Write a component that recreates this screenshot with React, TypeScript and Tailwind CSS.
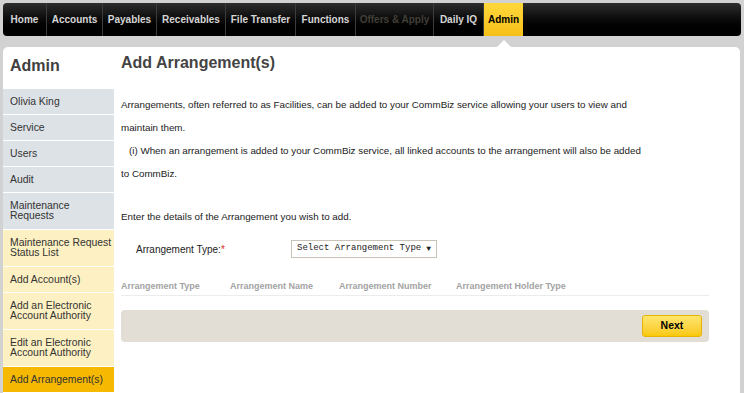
import React from 'react';

const navItems = [
  { label: 'Home', w: 'w-[44px]' },
  { label: 'Accounts', w: 'w-[56px]' },
  { label: 'Payables', w: 'w-[54px]' },
  { label: 'Receivables', w: 'w-[69px]' },
  { label: 'File Transfer', w: 'w-[70px]' },
  { label: 'Functions', w: 'w-[60px]' },
  { label: 'Offers & Apply', w: 'w-[78px]', disabled: true },
  { label: 'Daily IQ', w: 'w-[50px]' },
];

const sideItems = [
  { label: 'Olivia King', tone: 'gray' },
  { label: 'Service', tone: 'gray' },
  { label: 'Users', tone: 'gray' },
  { label: 'Audit', tone: 'gray' },
  { label: 'Maintenance Requests', tone: 'gray', tall: true },
  { label: 'Maintenance Request Status List', tone: 'yellow', tall: true },
  { label: 'Add Account(s)', tone: 'yellow' },
  { label: 'Add an Electronic Account Authority', tone: 'yellow', tall: true },
  { label: 'Edit an Electronic Account Authority', tone: 'yellow', tall: true },
  { label: 'Add Arrangement(s)', tone: 'active' },
];

function TopNav() {
  return (
    <div className="mx-[3px] mt-[3px] flex h-[33px] items-stretch rounded-[4px] bg-gradient-to-b from-[#2e2e2e] via-[#0a0a0a] to-black">
      {navItems.map((item) => (
        <div
          key={item.label}
          className={`flex shrink-0 items-center justify-center border-r border-[#3c3c3c] text-[10px] font-bold whitespace-nowrap ${item.w} ${
            item.disabled ? 'text-[#403e35]' : 'text-[#d6d6d6]'
          }`}
        >
          {item.label}
        </div>
      ))}
      <div className="relative flex w-[39px] shrink-0 items-center justify-center bg-gradient-to-b from-[#ffd83a] to-[#f6bf16] text-[10px] font-bold text-black">
        Admin
        {/* pointer under the active tab */}
        <div className="absolute left-1/2 top-full mt-[4px] h-0 w-0 -translate-x-1/2 border-x-[7px] border-b-[7px] border-x-transparent border-b-white" />
      </div>
    </div>
  );
}

function Sidebar() {
  return (
    <div className="w-[111px] shrink-0">
      <div className="h-[42px] pl-[7px] pt-[9px] text-[16px] font-bold leading-[20px] text-[#404040]">Admin</div>
      <div className="flex flex-col">
        {sideItems.map((item) => (
          <div
            key={item.label}
            className={`border-b border-white pl-[7px] text-[10.4px] leading-[10px] text-[#333] ${
              item.tall ? 'py-[8px]' : 'py-[7.5px]'
            } ${
              item.tone === 'gray' ? 'bg-[#dde2e6]' : item.tone === 'yellow' ? 'bg-[#fdf0c2]' : 'bg-[#f6b800]'
            }`}
          >
            {item.label}
          </div>
        ))}
      </div>
    </div>
  );
}

function Content() {
  return (
    <div className="flex-1 pl-[7px] pr-[31px] pt-[6px] text-[#222]">
      <h1 className="text-[16px] font-bold leading-[20px] text-[#444]">Add Arrangement(s)</h1>
      <div className="mt-[20px] w-[525px] text-[9.8px] leading-[23px]">
        <p>
          Arrangements, often referred to as Facilities, can be added to your CommBiz service allowing your users to view and
          maintain them.
        </p>
        <p>
          <span className="pl-[8px]">(i) When an arrangement is added to your CommBiz service, all linked accounts to the arrangement will also be added</span>
          <br />
          to CommBiz.
        </p>
        <p className="mt-[20px]">Enter the details of the Arrangement you wish to add.</p>
      </div>

      <div className="mt-[12px] flex items-center">
        <label className="w-[170px] pl-[15px] text-[10px] text-[#222]">
          Arrangement Type:<span className="text-[#e0262a]">*</span>
        </label>
        <div className="flex h-[18px] w-[146px] items-center justify-between border border-[#c9c2b6] bg-white pl-[5px] pr-[5px] font-['Liberation_Mono',monospace] text-[9px] text-[#222]">
          <span>Select Arrangement Type</span>
          <span className="text-[8px]">▼</span>
        </div>
      </div>

      <div className="mt-[22px] flex border-b border-[#ececec] pb-[1px] text-[9px] font-bold text-[#a3a3a3]">
        <div className="w-[109px]">Arrangement Type</div>
        <div className="w-[109px]">Arrangement Name</div>
        <div className="w-[117px]">Arrangement Number</div>
        <div className="flex-1">Arrangement Holder Type</div>
      </div>

      <div className="mt-[14px] flex h-[32px] items-center justify-end rounded-[4px] bg-[#e2ddd5] pr-[7px]">
        <button className="h-[22px] w-[60px] rounded-[3px] border border-[#e6b400] bg-gradient-to-b from-[#ffe56a] to-[#f9c800] text-[10.5px] font-bold text-black">
          Next
        </button>
      </div>
    </div>
  );
}

export default function App() {
  return (
    <div className="h-[393px] w-[744px] overflow-hidden bg-[#d2d2d2] font-['Liberation_Sans',Arial,sans-serif]">
      <TopNav />
      <div className="ml-[3px] mr-[4px] mt-[11px] flex h-[400px] rounded-t-[5px] bg-white">
        <Sidebar />
        <Content />
      </div>
    </div>
  );
}
